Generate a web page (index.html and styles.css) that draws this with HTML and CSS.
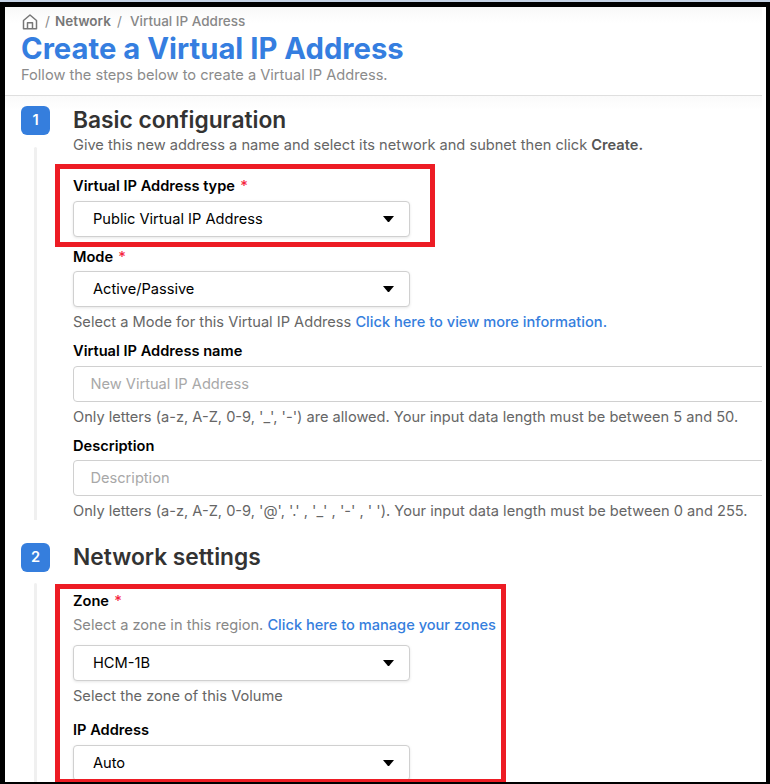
FILE: index.html
```html
<!DOCTYPE html>
<html lang="en">
<head>
<meta charset="utf-8">
<title>Create a Virtual IP Address</title>
<link rel="stylesheet" href="styles.css">
</head>
<body>
<div class="window">
  <div class="page">
    <header class="header">
      <nav class="breadcrumb">
        <svg class="home" viewBox="0 0 16 16" width="16" height="16" fill="none" stroke="#777" stroke-width="1.5" stroke-linejoin="round">
          <path d="M1.500 6.500 8 1l6.500 5.500V14.800H1.500z"/>
          <path d="M5.500 14.800V8.700h5v6.100"/>
        </svg>
        <span class="slash">/</span>
        <a class="crumb">Network</a>
        <span class="slash">/</span>
        <span class="current">Virtual IP Address</span>
      </nav>
      <h1>Create a Virtual IP Address</h1>
      <p class="subtitle">Follow the steps below to create a Virtual IP Address.</p>
    </header>

    <main class="steps">
      <section class="step">
        <div class="rail"><span class="badge">1</span><span class="line"></span></div>
        <div class="body">
          <h2>Basic configuration</h2>
          <p class="intro">Give this new address a name and select its network and subnet then click <b>Create.</b></p>

          <div class="field field-first">
            <div class="highlight highlight-type"></div>
            <label>Virtual IP Address type <i>*</i></label>
            <div class="select">Public Virtual IP Address<span class="caret"></span></div>
          </div>

          <div class="field field-mode">
            <label>Mode <i>*</i></label>
            <div class="select">Active/Passive<span class="caret"></span></div>
            <p class="hint">Select a Mode for this Virtual IP Address <a>Click here to view more information.</a></p>
          </div>

          <div class="field field-name">
            <label>Virtual IP Address name</label>
            <div class="input">New Virtual IP Address</div>
            <p class="hint">Only letters (a-z, A-Z, 0-9, '_', '-') are allowed. Your input data length must be between 5 and 50.</p>
          </div>

          <div class="field field-description">
            <label>Description</label>
            <div class="input">Description</div>
            <p class="hint">Only letters (a-z, A-Z, 0-9, '@', '.' , '_' , '-' , ' '). Your input data length must be between 0 and 255.</p>
          </div>
        </div>
      </section>

      <section class="step">
        <div class="rail"><span class="badge">2</span><span class="line line-open"></span></div>
        <div class="body">
          <h2>Network settings</h2>

          <div class="field field-first">
            <div class="highlight highlight-zone"></div>
            <label>Zone <i>*</i></label>
            <p class="lead">Select a zone in this region. <a>Click here to manage your zones</a></p>
            <div class="select">HCM-1B<span class="caret"></span></div>
            <p class="hint">Select the zone of this Volume</p>
          </div>

          <div class="field field-ip">
            <label>IP Address</label>
            <div class="select">Auto<span class="caret"></span></div>
          </div>
        </div>
      </section>
    </main>
  </div>
</div>
</body>
</html>
```
FILE: styles.css
```css
* { box-sizing: border-box; margin: 0; padding: 0; }

body {
  height: 784px;
  padding-top: 2px;
  overflow: hidden;
  background: #c6d3e6;
  font-family: Inter, "Liberation Sans", sans-serif;
  font-size: 14.62px;
  line-height: 20px;
  color: #000;
  white-space: nowrap;
}

.window {
  height: 782px;
  border: solid #000;
  border-width: 5px 4px 2px 5px;
  padding-right: 4px;
  background: #fff;
}

.page { height: 775px; overflow: hidden; }

.header {
  height: 89px;
  padding: 5px 0 0 16px;
  border-bottom: 1px solid #dfdfdf;
  background: linear-gradient(#f8f8f8, #fff 16px);
}

.breadcrumb {
  display: flex;
  align-items: center;
  height: 18px;
  font-size: 13.5px;
  line-height: 18px;
  color: #777;
}

.home { margin: 1px 7px 0 1px; }
.slash { width: 10px; color: #888; }
.crumb { width: 62px; font-weight: 600; }
.current { margin-left: 3px; font-weight: 500; color: #888; }

h1 {
  padding-top: 1px;
  font-size: 29.25px;
  font-weight: 700;
  line-height: 35px;
  color: #357ee0;
}

.subtitle { line-height: 18px; color: #8b8b8b; }

.steps {
  display: grid;
  row-gap: 22px;
  padding: 10px 0 0 16px;
  background: linear-gradient(#fafafa, #fff 14px);
}

.step { display: flex; }

.rail {
  display: flex;
  flex-direction: column;
  align-items: center;
  width: 29px;
  margin-right: 23px;
}

.badge {
  width: 29px;
  height: 29px;
  border-radius: 6px;
  background: #357edd;
  color: #fff;
  font-weight: 600;
  line-height: 29px;
  text-align: center;
}

.line {
  flex: 1;
  width: 3px;
  margin: 12px 0 1px;
  border-radius: 2px 2px 0 0;
  background: #f0f0f0;
}

.line-open { margin: 11px 0 -4px; }

.body { flex: 1; min-width: 0; }

h2 {
  font-size: 22.75px;
  font-weight: 620;
  line-height: 28px;
  color: #333;
}

.intro { line-height: 22px; color: #666; }
.intro b { font-weight: 600; color: #555; }

.field { position: relative; }
.field-first { margin-top: 20px; }
.field-mode { margin-top: 10px; }
.field-name, .field-description { margin-top: 9px; }
.field-ip { margin-top: 14px; }

label { display: block; margin-bottom: 5px; font-weight: 600; }
.field-mode label, .field-description label, .highlight-zone + label { margin-bottom: 4px; }
label i { margin-left: 1.5px; font-style: normal; font-weight: 500; color: #f5223d; }

.select {
  display: flex;
  align-items: center;
  justify-content: space-between;
  width: 337px;
  height: 36px;
  padding: 0 15px 0 19px;
  border: 1px solid #d0d0d0;
  border-radius: 4px;
  box-shadow: 0 1px 3px rgba(0, 0, 0, .1);
  background: #fff;
}

.caret {
  width: 11px;
  height: 6px;
  background: #000;
  clip-path: polygon(0 0, 100% 0, 55% 100%, 45% 100%);
}

.input {
  width: 720px;
  height: 36px;
  padding-left: 16.5px;
  border: 1px solid #d0d0d0;
  border-radius: 4px;
  line-height: 34px;
  color: #a8a8a8;
}

.hint { margin-top: 5px; color: #666; }
.lead { margin-bottom: 10px; color: #888; }
a { font-weight: 500; }
.hint a, .lead a { color: #357edd; }

.highlight {
  position: absolute;
  z-index: 1;
  left: -18px;
  border: 5px solid #ed1c24;
}

.highlight-type { top: -12px; width: 380px; height: 83px; }
.highlight-zone { top: -7px; width: 451px; height: 200px; }
```
